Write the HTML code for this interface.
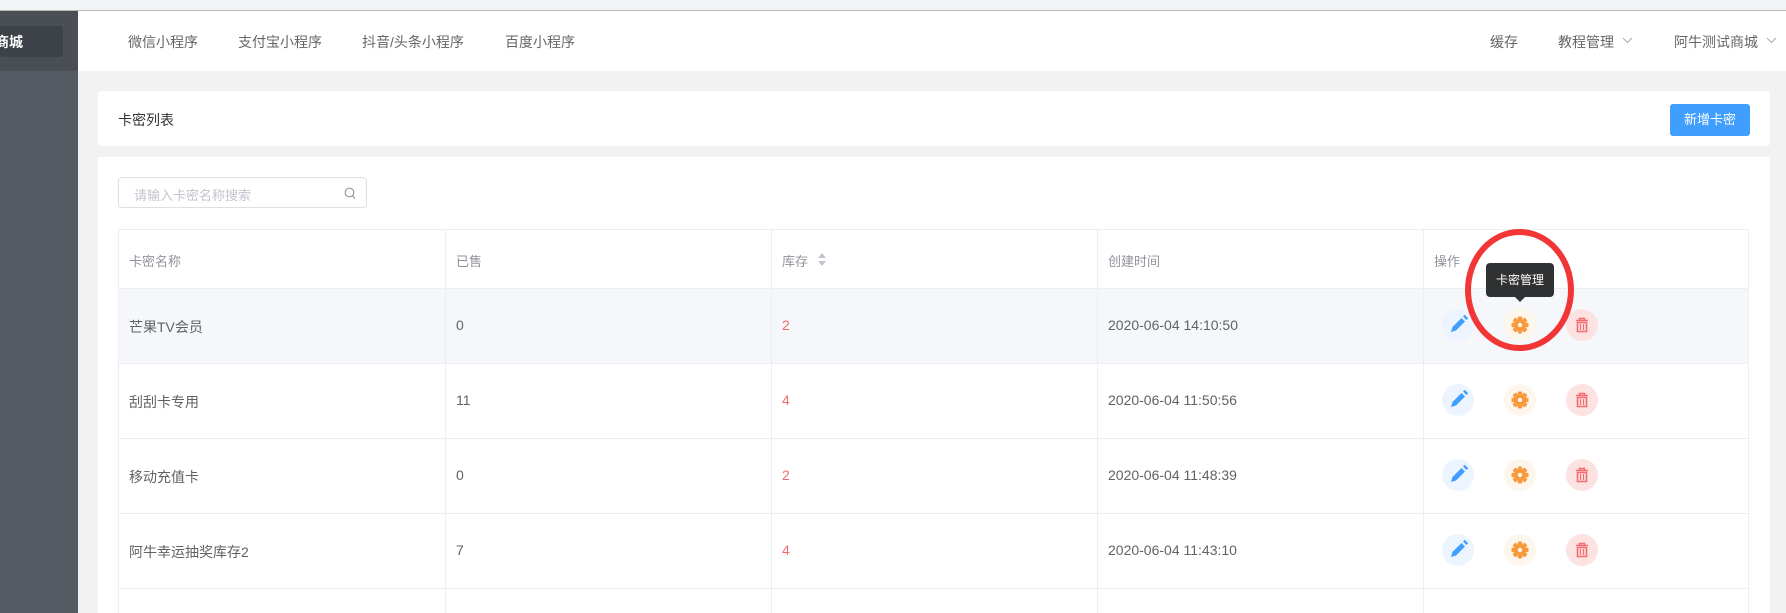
<!DOCTYPE html>
<html><head><meta charset="utf-8"><style>
*{margin:0;padding:0;box-sizing:border-box}
body{width:1786px;height:613px;overflow:hidden;background:#f2f2f2;font-family:"Liberation Sans","Noto Sans CJK SC",sans-serif;position:relative}
.a{position:absolute}
.t{position:absolute;white-space:nowrap}
</style></head><body>
<div class="a" style="left:0;top:0;width:1786px;height:10px;background:#f1f3f4"></div>
<div class="a" style="left:0;top:10px;width:1786px;height:1px;background:#b8b8b8"></div>
<div class="a" style="left:0;top:11px;width:78px;height:602px;background:#545b63"></div>
<div class="a" style="left:0;top:11px;width:78px;height:60px;background:#4a4f56"></div>
<div class="a" style="left:0;top:26px;width:63px;height:31px;background:#3d4148;border-radius:3px"></div>
<div class="t" style="left:-5px;top:32px;color:#fff;font-size:14px;font-weight:bold">商城</div>
<div class="a" style="left:78px;top:11px;width:1708px;height:60px;background:#fff"></div>
<div class="t" style="left:128px;top:32px;color:#666;font-size:14px">微信小程序</div>
<div class="t" style="left:238px;top:32px;color:#666;font-size:14px">支付宝小程序</div>
<div class="t" style="left:362px;top:32px;color:#666;font-size:14px">抖音/头条小程序</div>
<div class="t" style="left:505px;top:32px;color:#666;font-size:14px">百度小程序</div>
<div class="t" style="left:1490px;top:32px;color:#666;font-size:14px">缓存</div>
<div class="t" style="left:1558px;top:32px;color:#666;font-size:14px">教程管理</div>
<svg class="a" style="left:1622px;top:37px" width="11" height="7"><path d="M1 1L5.5 5.5L10 1" fill="none" stroke="#aaa" stroke-width="1"/></svg>
<div class="t" style="left:1674px;top:32px;color:#666;font-size:14px">阿牛测试商城</div>
<svg class="a" style="left:1766px;top:37px" width="11" height="7"><path d="M1 1L5.5 5.5L10 1" fill="none" stroke="#aaa" stroke-width="1"/></svg>

<div class="a" style="left:98px;top:91px;width:1672px;height:55px;background:#fff;border-radius:3px"></div>
<div class="t" style="left:118px;top:110px;color:#333;font-size:14px">卡密列表</div>
<div class="a" style="left:1670px;top:104px;width:80px;height:32px;background:#409eff;border-radius:3px;color:#fff;font-size:13px;text-align:center;line-height:32px">新增卡密</div>

<div class="a" style="left:98px;top:157px;width:1672px;height:456px;background:#fff"></div>
<div class="a" style="left:118px;top:177px;width:249px;height:31px;border:1px solid #dcdfe6;border-radius:4px"></div>
<div class="t" style="left:134px;top:185px;color:#c0c4cc;font-size:13px">请输入卡密名称搜索</div>
<svg class="a" style="left:344px;top:187px" width="12" height="13" viewBox="0 0 12 13"><circle cx="5.5" cy="5.5" r="4.3" fill="none" stroke="#999" stroke-width="1.2"/><path d="M8.6 8.8L11 11.5" stroke="#999" stroke-width="1.2"/></svg>

<div class="a" style="left:118px;top:229px;width:1631px;height:384px;border:1px solid #ebeef5;border-bottom:none"></div>
<div class="a" style="left:119px;top:288px;width:1629px;height:75px;background:#f5f7fa"></div>
<div class="a" style="left:119px;top:288px;width:1629px;height:1px;background:#ebeef5"></div>
<div class="a" style="left:119px;top:363px;width:1629px;height:1px;background:#ebeef5"></div>
<div class="a" style="left:119px;top:438px;width:1629px;height:1px;background:#ebeef5"></div>
<div class="a" style="left:119px;top:513px;width:1629px;height:1px;background:#ebeef5"></div>
<div class="a" style="left:119px;top:588px;width:1629px;height:1px;background:#ebeef5"></div>
<div class="a" style="left:445px;top:229px;width:1px;height:384px;background:#ebeef5"></div>
<div class="a" style="left:771px;top:229px;width:1px;height:384px;background:#ebeef5"></div>
<div class="a" style="left:1097px;top:229px;width:1px;height:384px;background:#ebeef5"></div>
<div class="a" style="left:1423px;top:229px;width:1px;height:384px;background:#ebeef5"></div>

<div style="font-size:13px;color:#909399">
<div class="t" style="left:129px;top:251px">卡密名称</div>
<div class="t" style="left:456px;top:251px">已售</div>
<div class="t" style="left:782px;top:251px">库存</div>
<svg class="a" style="left:818px;top:253px" width="8" height="13"><path d="M4 0L8 5H0Z M4 13L8 8H0Z" fill="#c0c4cc"/></svg>
<div class="t" style="left:1108px;top:251px">创建时间</div>
<div class="t" style="left:1434px;top:251px">操作</div>
</div>

<div style="font-size:14px;color:#606266">
<div class="t" style="left:129px;top:317px">芒果TV会员</div>
<div class="t" style="left:456px;top:317px">0</div>
<div class="t" style="left:782px;top:317px;color:#f56c6c">2</div>
<div class="t" style="left:1108px;top:317px">2020-06-04 14:10:50</div>
<div class="t" style="left:129px;top:392px">刮刮卡专用</div>
<div class="t" style="left:456px;top:392px">11</div>
<div class="t" style="left:782px;top:392px;color:#f56c6c">4</div>
<div class="t" style="left:1108px;top:392px">2020-06-04 11:50:56</div>
<div class="t" style="left:129px;top:467px">移动充值卡</div>
<div class="t" style="left:456px;top:467px">0</div>
<div class="t" style="left:782px;top:467px;color:#f56c6c">2</div>
<div class="t" style="left:1108px;top:467px">2020-06-04 11:48:39</div>
<div class="t" style="left:129px;top:542px">阿牛幸运抽奖库存2</div>
<div class="t" style="left:456px;top:542px">7</div>
<div class="t" style="left:782px;top:542px;color:#f56c6c">4</div>
<div class="t" style="left:1108px;top:542px">2020-06-04 11:43:10</div>
</div>

<svg class="a" style="left:1400px;top:300px" width="220" height="313">
<defs>
<g id="r">
<circle cx="58" cy="0" r="16" fill="#ecf5ff"/>
<path d="M51 7l1.5-5 9-9 3.5 3.5-9 9z M63-8.5l1.7-1.7 3.5 3.5-1.7 1.7z" fill="#409eff"/>
<circle cx="120" cy="0" r="16" fill="#fdf6ec"/>
<g fill="#f89a3c"><circle cx="120" cy="0" r="6"/>
<rect x="117.8" y="-8.5" width="4.4" height="17" rx="1"/>
<rect x="117.8" y="-8.5" width="4.4" height="17" rx="1" transform="rotate(45 120 0)"/>
<rect x="117.8" y="-8.5" width="4.4" height="17" rx="1" transform="rotate(90 120 0)"/>
<rect x="117.8" y="-8.5" width="4.4" height="17" rx="1" transform="rotate(135 120 0)"/></g>
<circle cx="120" cy="0" r="2.2" fill="#fdf6ec"/>
<circle cx="182" cy="0" r="16" fill="#fde2e2"/>
<path d="M176-4.5h12 M179.5-4.5v-2h5v2" stroke="#f56c6c" stroke-width="1.6" fill="none"/>
<path d="M177.5-2.5h9v9h-9z" fill="none" stroke="#f56c6c" stroke-width="1.6"/>
<path d="M180.5-1v6 M183.5-1v6" stroke="#f56c6c" stroke-width="1.2"/>
</g></defs>
<use href="#r" y="25"/><use href="#r" y="100"/><use href="#r" y="175"/><use href="#r" y="250"/>
</svg>

<div class="a" style="left:1486px;top:263px;width:68px;height:34px;background:#303133;border-radius:4px;color:#fff;font-size:12px;text-align:center;line-height:34px">卡密管理</div>
<div class="a" style="left:1515px;top:297px;width:0;height:0;border-left:5px solid transparent;border-right:5px solid transparent;border-top:5px solid #303133"></div>
<div class="a" style="left:1465px;top:229px;width:109px;height:122px;border:6px solid #f23535;border-radius:50%"></div>
</body></html>
